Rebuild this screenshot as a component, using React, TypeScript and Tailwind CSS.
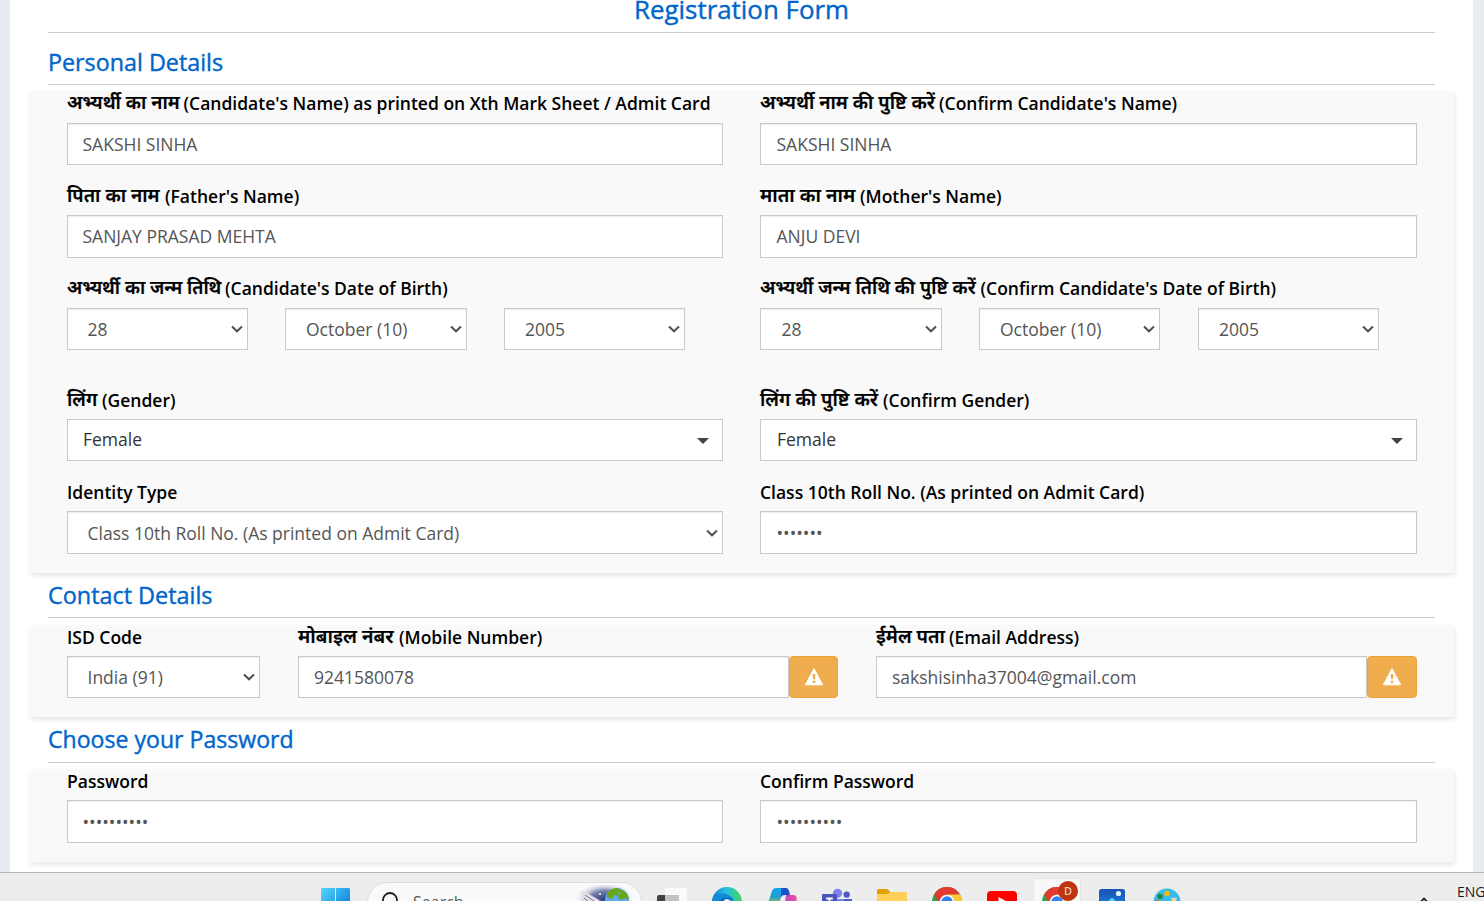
import React from "react";

function Hindi({ children, w }: { children: string; w: string }) {
  return (
    <span
      lang="hi"
      className={`${w} inline-block shrink-0 whitespace-nowrap font-semibold leading-[28px] [-webkit-text-stroke:0.2px_#000] font-['Nirmala_UI','Noto_Sans_Devanagari',sans-serif]`}
    >
      {children}
    </span>
  );
}

function Field({ label, hindi, hw = "", children, labelBox = "h-8" }: {
  label: string; hindi?: string; hw?: string; children: React.ReactNode; labelBox?: string;
}) {
  return (
    <div className="flex min-w-0 flex-col">
      <div className={`flex shrink-0 whitespace-pre text-[17.5px] font-semibold leading-6 text-black ${labelBox}`}>
        {hindi && <Hindi w={hw}>{hindi}</Hindi>}
        <span>{label}</span>
      </div>
      {children}
    </div>
  );
}

const boxBase =
  "flex min-w-0 items-center border border-[#c9c9c9] bg-white text-[17.5px] leading-6 text-[#555]";

function Box({ value, h = "h-[42px]", w = "w-full", pad = "pl-[15px]" }: { value: string; h?: string; w?: string; pad?: string }) {
  return (
    <div className={`${boxBase} ${h} ${w} ${pad} shadow-[inset_0_1px_1px_rgba(0,0,0,0.075)]`}>{value}</div>
  );
}

function Select({ value, h = "h-[42px]", w = "w-full", pad = "pl-5" }: { value: string; h?: string; w?: string; pad?: string }) {
  return (
    <div className={`${boxBase} ${h} ${w} ${pad} shrink-0 justify-between pr-1 shadow-[inset_0_1px_1px_rgba(0,0,0,0.075)]`}>
      <span>{value}</span>
      <svg width="12" height="8" viewBox="0 0 12 8" fill="none" stroke="#505050" strokeWidth="2">
        <path d="M1 1.5 6 6.3 11 1.5" />
      </svg>
    </div>
  );
}

function Dropdown({ value, pad = "pl-[15px]" }: { value: string; pad?: string }) {
  return (
    <div className={`${boxBase} ${pad} h-[42px] w-full justify-between pb-0.5 pr-[13px] text-[#333]!`}>
      <span>{value}</span>
      <svg width="12" height="6" viewBox="0 0 12 6" className="mt-1"><path d="M0 0h12L6 6z" fill="#444" /></svg>
    </div>
  );
}

function Warn({ w }: { w: string }) {
  return (
    <button className={`${w} flex h-[42px] shrink-0 items-center justify-center rounded-[4px] border border-[#eea236] bg-[#f0ad4e]`}>
      <svg width="20" height="18" viewBox="0 0 20 18">
        <path d="M10 .7 18.6 16.8H1.4z" fill="#fff" stroke="#fff" strokeWidth="1" strokeLinejoin="round" />
        <path d="M8.6 6h2.8l-.4 5.2H9zM8.7 12.7h2.6v2.3H8.7z" fill="#f0ad4e" />
      </svg>
    </button>
  );
}

function Heading({ children, className }: { children: string; className: string }) {
  return (
    <h2 className={`${className} mx-[38px] whitespace-nowrap border-b border-[#ccc] text-[#0066cc] [-webkit-text-stroke:0.4px_#0066cc]`}>{children}</h2>
  );
}

const card =
  "ml-[19px] mr-[19px] rounded-[3px] bg-[#f9f9f9] pl-[38px] pr-[37px] shadow-[1px_3px_4px_rgba(0,0,0,0.09)]";
const cols = "grid grid-cols-[656px_657px] gap-x-[37px]";

function Chrome() {
  return (
    <svg width="30" height="30" viewBox="0 0 30 30">
      <circle cx="15" cy="15" r="15" fill="#2da44e" />
      <path d="M2 7.5A15 15 0 0 1 28 7.5L15 8.3 8.6 18.5z" fill="#e23a2e" />
      <path d="M28 7.5A15 15 0 0 1 15 30l6.2-11.5L15 7.5z" fill="#fcc934" />
      <circle cx="15" cy="15" r="7.3" fill="#fff" />
      <circle cx="15" cy="15" r="5.8" fill="#3182f3" />
    </svg>
  );
}

function Taskbar() {
  return (
    <footer className="flex h-[29px] shrink-0 items-start overflow-hidden border-t border-[#b9b9b9] bg-[#ededed] pl-[321px]">
      <svg className="mt-[15px] shrink-0" width="29" height="29" viewBox="0 0 29 29">
        <defs>
          <linearGradient id="win" x1="0" y1="0" x2="1" y2="1">
            <stop stopColor="#52d8ff" /><stop offset="1" stopColor="#0067c9" />
          </linearGradient>
        </defs>
        <path d="M1 0h13v14H0V1zM15 0h13l1 1v13H15zM0 15h14v14H0zM15 15h14v14H15z" fill="url(#win)" />
      </svg>
      <div className="ml-[17px] mt-[9px] flex h-10 w-[275px] shrink-0 items-start overflow-hidden rounded-full border border-[#dcdcdc] bg-[#fafafa]">
        <svg className="ml-[13px] mt-[9px]" width="18" height="20" viewBox="0 0 18 20" fill="none" stroke="#222" strokeWidth="1.8">
          <circle cx="9" cy="8" r="7" /><path d="m4 14-4 5" />
        </svg>
        <span className="ml-[14px] mt-[7px] text-[16px] leading-6 text-[#5b5b5b]">Search</span>
        <svg className="ml-auto mr-0.5 mt-[2px]" width="64" height="20" viewBox="0 0 64 20">
          <defs>
            <radialGradient id="space"><stop stopColor="#2b3b78" /><stop offset=".5" stopColor="#596597" stopOpacity=".8" /><stop offset="1" stopColor="#fff" stopOpacity="0" /></radialGradient>
          </defs>
          <ellipse cx="30" cy="14" rx="30" ry="17" fill="url(#space)" />
          <path d="M5 7q4-2 7 1l12 7q3 3 0 5H12l-4-7z" fill="#e3e2eb" /><path d="m10 10 9 6m-10-3 5 4" stroke="#777486" />
          <circle cx="25" cy="9" r="1" fill="#fff" />
          <circle cx="42" cy="15" r="12" fill="#5eabed" />
          <path d="M32 8q5-5 11-5l4 3-4 2 1 3-5-1-2 4-5-2zM47 5q6 3 7 10l-4-2-4 2-3-3z" fill="#67a713" />
        </svg>
      </div>
      <svg className="ml-[15px] mt-[14px] shrink-0" width="30" height="30" viewBox="0 0 30 30">
        <path d="M0 10q0-2 2-2h20v14H0z" fill="#414141" /><rect x="8" y="1" width="22" height="26" rx="1" fill="#fafafa" /><path d="M8 8h14v14H8z" fill="#c1c1c1" />
      </svg>
      <svg className="ml-[25px] mt-[14px] shrink-0" width="30" height="30" viewBox="0 0 30 30">
        <defs><linearGradient id="edge"><stop stopColor="#087fd0" /><stop offset=".45" stopColor="#26bce3" /><stop offset="1" stopColor="#42d957" /></linearGradient></defs>
        <circle cx="15" cy="15" r="15" fill="url(#edge)" />
        <path d="M0 13C3 5 16 4 22 13l-6 7-15 5z" fill="#1389d7" /><path d="M3 25c0-11 8-17 17-13l-7 5 3 12z" fill="#0867b2" />
        <circle cx="15" cy="15.5" r="3.5" fill="#e8f7ff" />
      </svg>
      <svg className="ml-[25px] mt-[15px] shrink-0" width="30" height="28" viewBox="0 0 30 28">
        <defs>
          <linearGradient id="cpA" x2="0" y2="1"><stop stopColor="#16a7ef" /><stop offset=".4" stopColor="#1e9cd2" /><stop offset=".7" stopColor="#9fcb3d" /></linearGradient>
          <linearGradient id="cpB"><stop stopColor="#a044df" /><stop offset="1" stopColor="#f04e9b" /></linearGradient>
        </defs>
        <path d="M9 0h12q-5 1-7 9l-3 13H3Q-1 21 2 12L5 3Q6 0 9 0z" fill="url(#cpA)" />
        <path d="M14 0h5q3 0 4 7h-5q-3 0-4 2z" fill="#1753cb" />
        <path d="M19 7h8q4 1 2 8l-3 10q-1 3-5 3h-9q4-1 5-7z" fill="url(#cpB)" />
      </svg>
      <svg className="ml-[25px] mt-[15px] shrink-0" width="30" height="28" viewBox="0 0 30 28">
        <circle cx="15.5" cy="5.3" r="4.6" fill="#7b83eb" /><circle cx="24.7" cy="6.6" r="3.2" fill="#5059c9" />
        <path d="M20 11h10v9q-3 6-10 4z" fill="#5059c9" /><path d="M9 11h13v10q-4 7-13 4z" fill="#7b83eb" />
        <rect y="6" width="15" height="15" rx="1" fill="#4b53bc" />
        <path d="M4.2 10.5h6.6M7.5 10.5v8" stroke="#fff" strokeWidth="1.8" />
      </svg>
      <svg className="ml-[25px] mt-4 shrink-0" width="30" height="26" viewBox="0 0 30 26">
        <path d="M0 2q0-2 2-2h8l3 2.5V8H0z" fill="#dfa100" /><path d="M0 5h10l4-2h16v23H0z" fill="#ffd057" />
      </svg>
      <div className="ml-[25px] mt-[14px] shrink-0"><Chrome /></div>
      <svg className="ml-[25px] mt-[18px] shrink-0" width="30" height="22" viewBox="0 0 30 22">
        <rect width="30" height="22" rx="4" fill="#f00" /><path d="m11.5 6 9 5-9 5z" fill="#fff" />
      </svg>
      <div className="relative ml-4 mt-[5px] h-10 w-[48px] shrink-0 rounded-[5px] border border-[#e4e4e4] bg-[#f8f8f8]">
        <div className="ml-2 mt-2"><Chrome /></div>
        <span className="absolute left-[24px] top-[2px] flex size-5 items-center justify-center rounded-full bg-[#bd3610] text-[11px] font-semibold text-[#f0cbbf]">D</span>
      </div>
      <svg className="ml-[18px] mt-4 shrink-0" width="26" height="26" viewBox="0 0 26 26">
        <defs><linearGradient id="pho" x2="0" y2="1"><stop stopColor="#1a51b5" /><stop offset="1" stopColor="#1693e0" /></linearGradient></defs>
        <rect width="26" height="26" rx="2.5" fill="url(#pho)" /><circle cx="19.5" cy="4.5" r="2.6" fill="#e7f4ff" /><path d="M2 23 11 10q2-2 4 0l9 13z" fill="#55cbfa" />
      </svg>
      <svg className="ml-[28px] mt-[15px] shrink-0" width="28" height="28" viewBox="0 0 28 28">
        <circle cx="14" cy="14" r="13.5" fill="#37bdec" /><circle cx="7" cy="8.5" r="2.8" fill="#218849" /><circle cx="14" cy="5.5" r="2.7" fill="#ffb900" /><circle cx="4.2" cy="14" r="2.2" fill="#e26535" />
        <path d="M18 10q3-1 6 0l-2 5h-2z" fill="#f4d1a3" /><path d="M20 14h2v11h-2z" fill="#b87b48" />
      </svg>
      <svg className="ml-[237px] mt-[24px] shrink-0" width="12" height="8" viewBox="0 0 12 8" fill="none" stroke="#222" strokeWidth="1.8"><path d="m1 6.5 5-5 5 5" /></svg>
      <span className="ml-[27px] mt-[9px] text-[14px] leading-5 text-[#1c1c1c]">ENG</span>
    </footer>
  );
}

export default function App() {
  return (
    <div className="flex h-[901px] w-[1484px] flex-col overflow-hidden bg-[#e8ebf0] font-['Open_Sans','Noto_Sans',sans-serif]">
      <main className="ml-[10px] h-[872px] w-[1463px] shrink-0 overflow-hidden bg-white">
        <Heading className="h-[33px] text-center text-[25.9px] leading-[18px]">Registration Form</Heading>
        <Heading className="h-[52px] text-[23.3px] leading-[58px]">Personal Details</Heading>
        <section className={`${card} mt-1.5 h-[482px]`}>
          <div className={`${cols} h-[92px]`}>
            <Field hindi="अभ्यर्थी का नाम" hw="w-[116.5px] text-[18.9px]" label="(Candidate's Name) as printed on Xth Mark Sheet / Admit Card"><Box pad="pl-[14.5px]" value="SAKSHI SINHA" /></Field>
            <Field hindi="अभ्यर्थी नाम की पुष्टि करें" hw="w-[179px] text-[19px]" label="(Confirm Candidate's Name)"><Box pad="pl-[15.5px]" value="SAKSHI SINHA" /></Field>
          </div>
          <div className={`${cols} h-[93px]`}>
            <Field labelBox="h-8 pt-px" hindi="पिता का नाम" hw="w-[98px] text-[19px]" label="(Father's Name)"><Box h="h-[43px] pb-0.5" pad="pl-[14.5px]" value="SANJAY PRASAD MEHTA" /></Field>
            <Field labelBox="h-8 pt-px" hindi="माता का नाम" hw="w-[100px] text-[19.4px]" label="(Mother's Name)"><Box h="h-[43px] pb-0.5" pad="pl-[15.5px]" value="ANJU DEVI" /></Field>
          </div>
          <div className={`${cols} h-[111px]`}>
            <Field hindi="अभ्यर्थी का जन्म तिथि" hw="w-[158px] text-[18.6px]" label="(Candidate's Date of Birth)">
              <div className="flex gap-[37px]">
                <Select value="28" w="w-[181px]" pad="pl-[19.5px]" />
                <Select value="October (10)" w="w-[182px]" />
                <Select value="2005" w="w-[181px]" />
              </div>
            </Field>
            <Field hindi="अभ्यर्थी जन्म तिथि की पुष्टि करें" hw="w-[220.5px] text-[18.7px]" label="(Confirm Candidate's Date of Birth)">
              <div className="flex gap-[37px]">
                <Select value="28" w="w-[182px]" pad="pl-[20.5px]" />
                <Select value="October (10)" w="w-[181px]" />
                <Select value="2005" w="ml-px w-[181px]" />
              </div>
            </Field>
          </div>
          <div className={`${cols} h-[92px]`}>
            <Field labelBox="h-8 pt-px" hindi="लिंग" hw="w-[35px] text-[19px]" label="(Gender)"><Dropdown value="Female" /></Field>
            <Field labelBox="h-8 pt-px" hindi="लिंग की पुष्टि करें" hw="w-[123px] text-[19.1px]" label="(Confirm Gender)"><Dropdown pad="pl-4" value="Female" /></Field>
          </div>
          <div className={cols}>
            <Field labelBox="h-8 pt-px" label="Identity Type"><Select h="h-[43px]" pad="pl-[19.5px]" value="Class 10th Roll No. (As printed on Admit Card)" /></Field>
            <Field labelBox="h-8 pt-px" label="Class 10th Roll No. (As printed on Admit Card)"><Box h="h-[43px]" pad="pl-[15.5px]" value="•••••••" /></Field>
          </div>
        </section>
        <Heading className="h-[45px] text-[23.4px] leading-[44px]">Contact Details</Heading>
        <section className={`${card} mt-[7px] h-[92px]`}>
          <div className="grid grid-cols-[193px_540px_541px] gap-x-[38px]">
            <Field labelBox="h-[31px]" label="ISD Code"><Select pad="pl-[19.5px]" value="India (91)" /></Field>
            <Field labelBox="h-[31px]" hindi="मोबाइल नंबर" hw="w-[101px] text-[19.5px]" label="(Mobile Number)">
              <div className="flex"><Box w="w-[491px]" value="9241580078" /><Warn w="w-[49px]" /></div>
            </Field>
            <Field labelBox="h-[31px]" hindi="ईमेल पता" hw="w-[73px] text-[19.2px]" label="(Email Address)">
              <div className="flex"><Box w="w-[491px]" value="sakshisinha37004@gmail.com" /><Warn w="w-[50px]" /></div>
            </Field>
          </div>
        </section>
        <Heading className="h-[46px] text-[23.1px] leading-[44px]">Choose your Password</Heading>
        <section className={`${card} mt-1.5 h-[93px]`}>
          <div className={cols}>
            <Field labelBox="h-[31px]" label="Password"><Box h="h-[43px]" pad="pl-[14.5px]" value="••••••••••" /></Field>
            <Field labelBox="h-[31px]" label="Confirm Password"><Box h="h-[43px]" pad="pl-[15.5px]" value="••••••••••" /></Field>
          </div>
        </section>
      </main>
      <Taskbar />
    </div>
  );
}
